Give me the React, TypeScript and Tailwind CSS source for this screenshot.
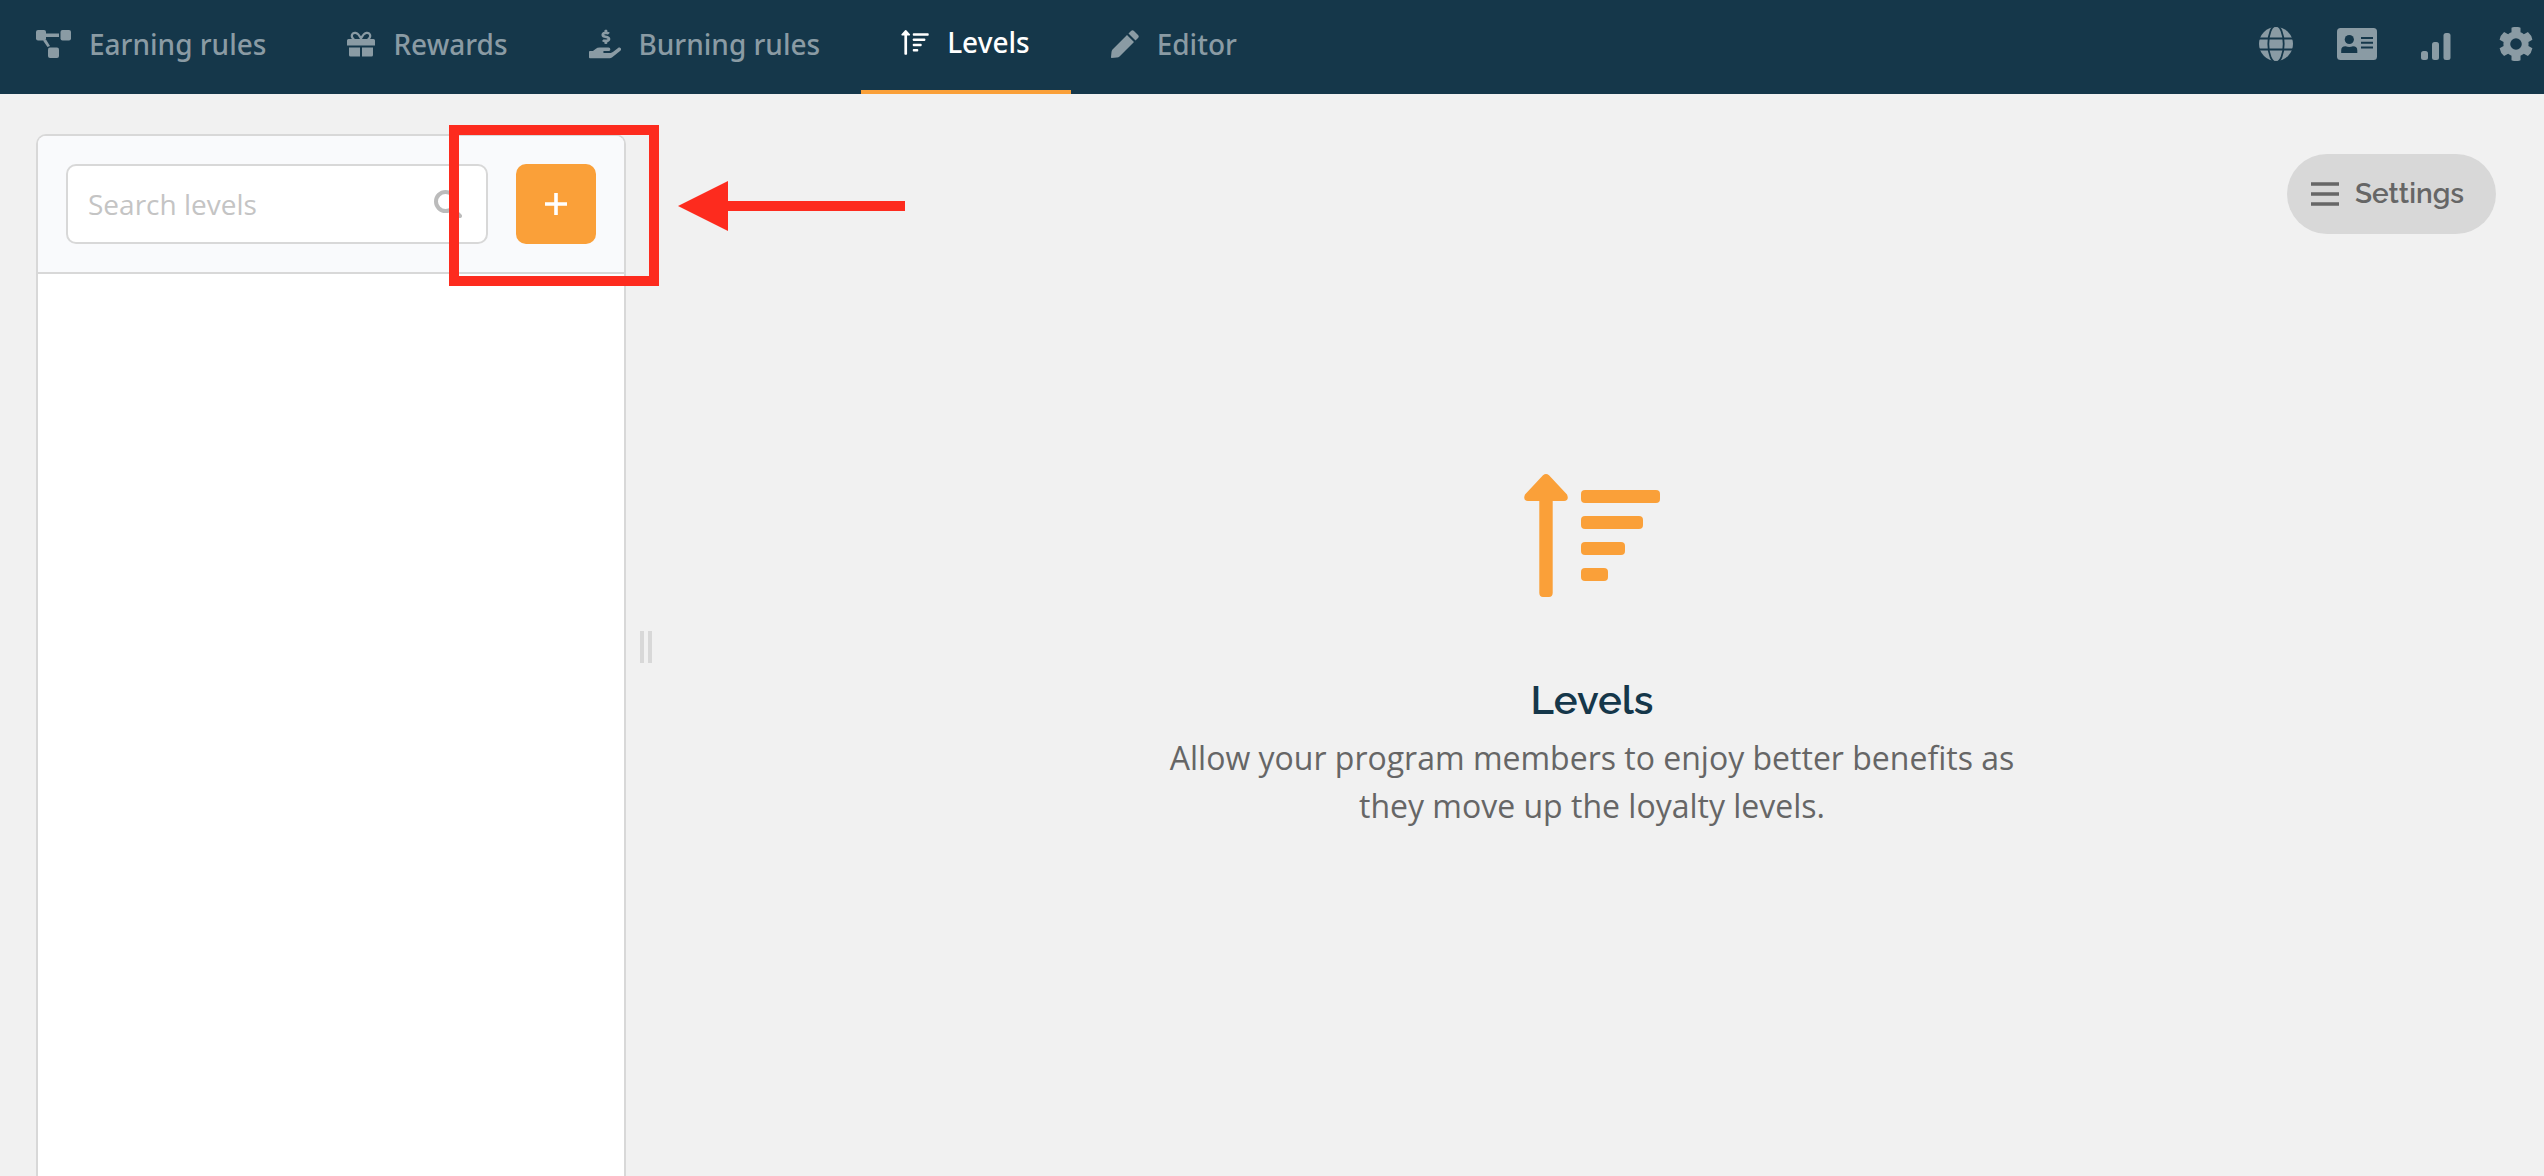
import React, { useState } from "react";
import { FaHandHoldingUsd } from "react-icons/fa";

const NodesIcon = () => (
  <svg viewBox="0 0 35 28" className="w-[35px] h-7 shrink-0" fill="currentColor">
    <rect x="0" y="0" width="10" height="10.500" rx="2" />
    <rect x="24.500" y="0" width="10.500" height="10.500" rx="2" />
    <rect x="12" y="17.500" width="11" height="10.500" rx="2" />
    <path d="M10 3.500h13v3.500H10zM7 10.500l3-1 4 6.500-2.500 1z" />
  </svg>
);

const GiftIcon = () => (
  <svg viewBox="0 0 28 28" className="size-7 shrink-0" fill="currentColor">
    <path d="M1.500 9h25Q28 9 28 10.500V15.500H0V10.500Q0 9 1.500 9ZM2 17.500h11v9H3.500Q2 26.500 2 25zM15 17.500h11V25Q26 26.500 24.500 26.500H15z" />
    <path
      d="M7 9.500C3 6.500 5 2.500 8.500 2.800C11 3 12.500 5.500 14 8.500C15.500 5.500 17 3 19.500 2.800C23 2.500 25 6.500 21 9.500"
      fill="none"
      stroke="currentColor"
      strokeWidth="2.200"
    />
  </svg>
);

const LevelsIcon = ({ className }: { className: string }) => (
  <svg viewBox="0 0 136 124" className={className} fill="currentColor">
    <path d="M19 1.300Q22 -1.200 25 1.300L43 20.500Q45.500 26.500 40 27H28.700V119Q28.500 123 25 123H19Q15.500 123 15.300 119V27H4Q-1.500 26.500 1 20.500Z" />
    <rect x="57" y="16" width="79" height="13" rx="4" />
    <rect x="57" y="42" width="62" height="13" rx="4" />
    <rect x="57" y="68" width="44" height="13" rx="4" />
    <rect x="57" y="94" width="27" height="13" rx="4" />
  </svg>
);

const PencilIcon = () => (
  <svg viewBox="0 0 28 28" className="size-7 shrink-0" fill="currentColor">
    <path d="M16 5L23 12L8.500 26.500Q7.500 27.500 6 27.500L0.500 28Q0 28 0 27L0.500 22Q0.600 20.500 1.500 19.500Z" />
    <path d="M17.500 3.500L20 1Q21.500 -0.500 23 1L27 5Q28.500 6.500 27 8L24.500 10.500Z" />
  </svg>
);

const GlobeIcon = () => (
  <svg viewBox="0 0 34 34" className="size-[34px]">
    <circle cx="17" cy="17" r="17" fill="currentColor" />
    <g fill="none" stroke="#15374a" strokeWidth="1.800">
      <ellipse cx="17" cy="17" rx="7.700" ry="18.500" />
      <path d="M0 11.500h34M0 22.500h34" />
    </g>
  </svg>
);

const CardIcon = () => (
  <svg viewBox="0 0 40 32" className="h-8 w-10">
    <rect width="40" height="32" rx="3.500" fill="currentColor" />
    <g fill="#15374a">
      <circle cx="12.300" cy="11.500" r="4.600" />
      <path d="M4.200 25V22.500Q4.200 18.300 8.500 18.300Q12.300 19.600 16 18.300Q20.300 18.300 20.300 22.500V25Z" />
      <path d="M24 9h12v2H24zM24 13.800h12v2H24zM24 18.400h12v2H24z" />
    </g>
  </svg>
);

const SignalIcon = () => (
  <svg viewBox="0 0 34 34" className="size-[34px]" fill="currentColor">
    <rect x="0" y="24" width="7" height="9" rx="2.500" />
    <rect x="11" y="15" width="7" height="18" rx="2.500" />
    <rect x="22.500" y="6" width="7" height="27" rx="2.500" />
  </svg>
);

const GearIcon = () => (
  <svg viewBox="-17 -17 34 34" className="size-[34px]" fill="currentColor">
    <path
      fillRule="evenodd"
      d="M-4.500-16.300Q0-18 4.500-16.300V-11.700Q6.300-11 7.900-9.800L11.900-12.100Q15.600-9 16.400-4.300L12.400-2Q12.700 0 12.400 2L16.400 4.300Q15.600 9 11.900 12.100L7.900 9.800Q6.300 11 4.500 11.700V16.300Q0 18-4.500 16.300V11.700Q-6.300 11-7.900 9.800L-11.900 12.100Q-15.600 9-16.400 4.300L-12.400 2Q-12.700 0-12.400-2L-16.400-4.300Q-15.600-9-11.900-12.100L-7.900-9.800Q-6.300-11-4.500-11.700ZM5.800 0A5.800 5.800 0 1 0-5.800 0A5.800 5.800 0 1 0 5.800 0Z"
    />
  </svg>
);

const tabs = [
  { label: "Earning rules", icon: <NodesIcon /> },
  { label: "Rewards", icon: <GiftIcon /> },
  { label: "Burning rules", icon: <FaHandHoldingUsd className="size-8 shrink-0" /> },
  { label: "Levels", icon: <LevelsIcon className="w-7 h-[25px] shrink-0" /> },
  { label: "Editor", icon: <PencilIcon /> },
];

const tools = [
  { label: "Website", icon: <GlobeIcon /> },
  { label: "Members", icon: <CardIcon /> },
  { label: "Statistics", icon: <SignalIcon /> },
  { label: "Preferences", icon: <GearIcon /> },
];

const App = () => {
  const [active, setActive] = useState("Levels");
  const [search, setSearch] = useState("");

  return (
    <div className="flex h-screen flex-col overflow-hidden bg-[#f1f1f1] font-['Open_Sans',sans-serif]">
      <header className="flex h-[94px] shrink-0 items-stretch justify-between bg-[#15374a] text-[#8a9ba4]">
        <nav className="flex">
          {tabs.map((tab) => (
            <button
              key={tab.label}
              type="button"
              onClick={() => setActive(tab.label)}
              className={`flex cursor-pointer items-center gap-[18px] border-b-4 pr-[41px] pl-10 first:pl-9 font-['Noto_Sans',sans-serif] text-[28px] font-medium ${
                active === tab.label ? "border-[#faa039] pb-1.5 text-white" : "border-transparent pb-0.5"
              }`}
            >
              {tab.icon}
              {tab.label}
            </button>
          ))}
        </nav>
        <div className="flex items-center gap-11 pr-[11px] pb-[6px]">
          {tools.map((tool) => (
            <button key={tool.label} type="button" aria-label={tool.label} className="cursor-pointer">
              {tool.icon}
            </button>
          ))}
        </div>
      </header>

      <div className="flex min-h-0 flex-1">
        <aside className="relative mt-10 ml-9 flex w-[590px] shrink-0 flex-col rounded-t-[10px] border-2 border-b-0 border-[#d8d8d8] bg-white">
          <div className="flex items-center gap-7 rounded-t-lg border-b-2 border-[#d8d8d8] bg-[#f9fafc] p-7">
            <label className="flex h-20 min-w-0 flex-1 items-center rounded-[10px] border-2 border-[#d8d8d8] bg-white pr-6 pl-5">
              <input
                type="text"
                aria-label="Search levels"
                placeholder="Search levels"
                value={search}
                onChange={(e) => setSearch(e.target.value)}
                className="min-w-0 flex-1 text-[28px] text-[#666] outline-none placeholder:text-[#c4c4c4]"
              />
              <svg viewBox="0 0 28 28" className="size-7 shrink-0" fill="none" stroke="#bbb" strokeWidth="4" strokeLinecap="round">
                <circle cx="11.500" cy="11.500" r="9.500" />
                <path d="M18.500 18.500l7.500 7.500" />
              </svg>
            </label>
            <button
              type="button"
              aria-label="Add level"
              className="flex size-20 shrink-0 cursor-pointer items-center justify-center rounded-[10px] bg-[#faa039] text-white"
            >
              <svg viewBox="0 0 22 22" className="size-[22px]" stroke="currentColor" strokeWidth="3.600">
                <path d="M11 0v22M0 11h22" />
              </svg>
            </button>
          </div>
          {/* callout around the add button */}
          <div className="pointer-events-none absolute -top-[11px] left-[411px] h-[161px] w-[210px] border-10 border-[#fd2b1e]" />
          <svg
            viewBox="0 0 227 50"
            className="pointer-events-none absolute top-[45px] left-[640px] h-[50px] w-[227px]"
            fill="#fd2b1e"
          >
            <path d="M0 25L50 0V20H227V30H50V50Z" />
          </svg>
        </aside>

        <div className="ml-[14px] flex items-center gap-1 pt-6">
          <span className="h-8 w-1 bg-[#d8d8d8]" />
          <span className="h-8 w-1 bg-[#d8d8d8]" />
        </div>

        <main className="flex min-w-0 flex-1 flex-col px-12 pt-15">
          <button
            type="button"
            className="flex h-20 cursor-pointer items-center gap-4 self-end rounded-full bg-[#d8d8d8] pr-8 pl-6 font-['Raleway','Lato',sans-serif] text-[28px] font-semibold text-[#666]"
          >
            <svg viewBox="0 0 28 24" className="h-6 w-7" stroke="currentColor" strokeWidth="3.600">
              <path d="M0 2h28M0 12h28M0 22h28" />
            </svg>
            Settings
          </button>
          <section className="mt-60 mr-3 flex flex-col items-center text-center">
            <LevelsIcon className="h-[124px] w-[136px] text-[#faa039]" />
            <h1 className="mt-[78px] font-['Raleway','Lato',sans-serif] text-[40px] leading-12 font-semibold text-[#15374a]">
              Levels
            </h1>
            <p className="mt-[10px] max-w-[900px] text-[32px] leading-12 text-[#666]">
              Allow your program members to enjoy better benefits as
              <br />
              they move up the loyalty levels.
            </p>
          </section>
        </main>
      </div>
    </div>
  );
};

export default App;
